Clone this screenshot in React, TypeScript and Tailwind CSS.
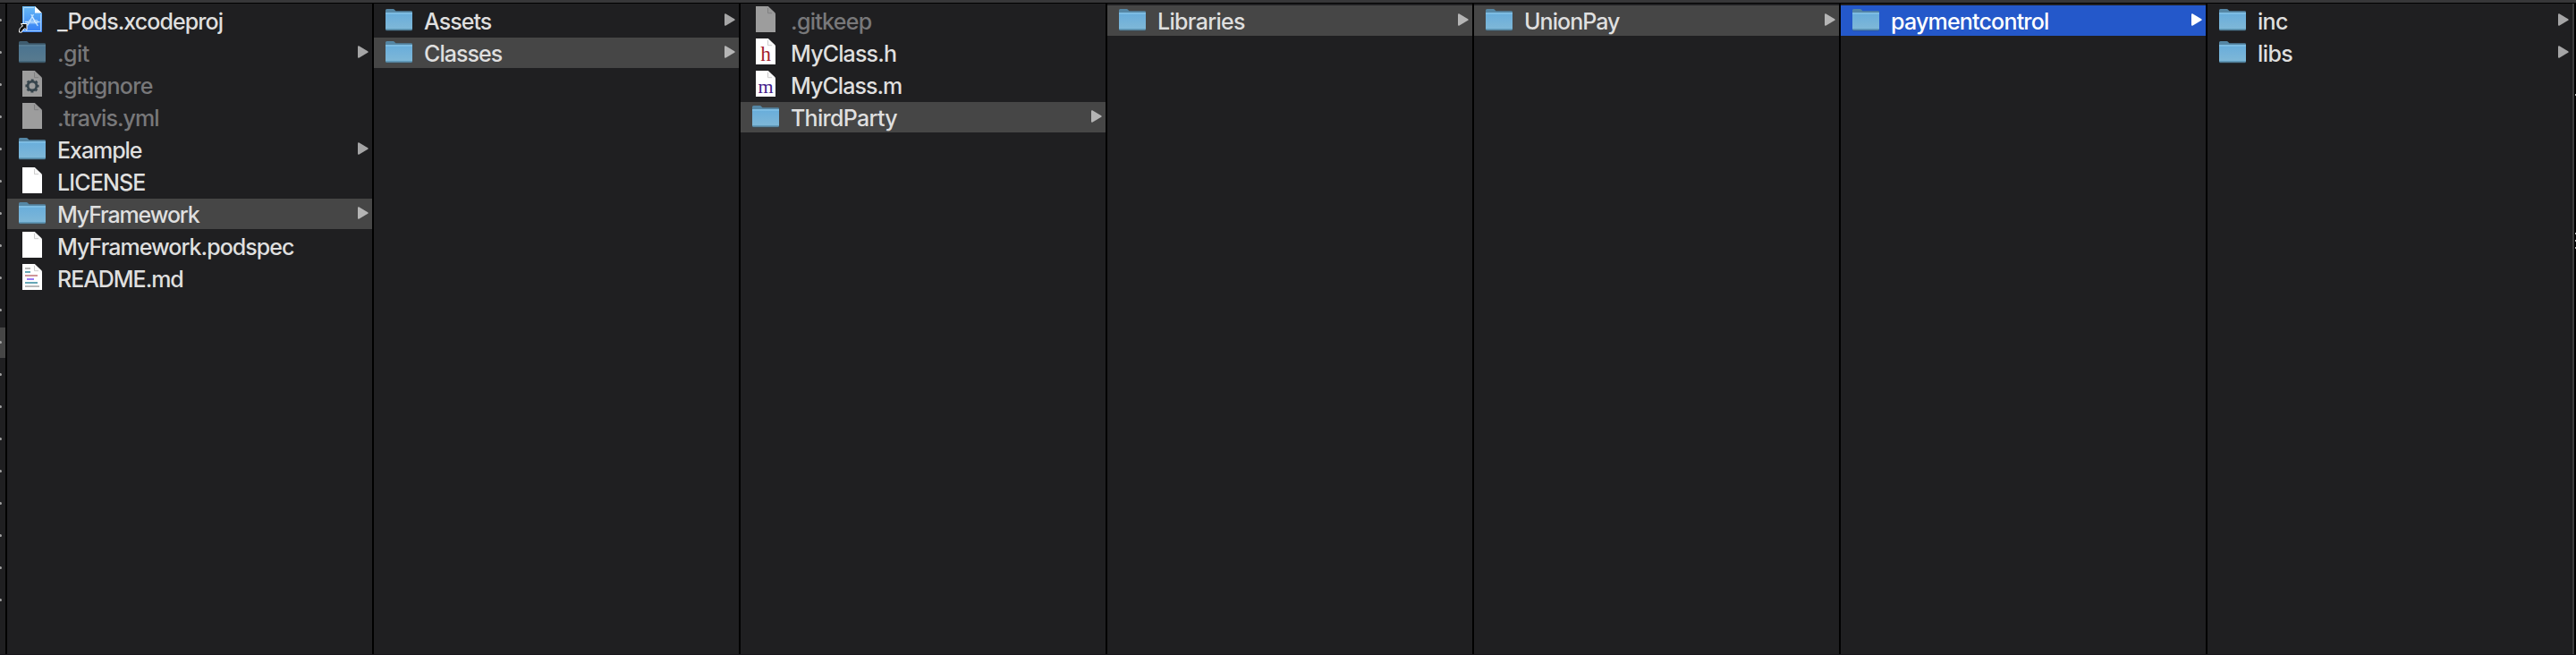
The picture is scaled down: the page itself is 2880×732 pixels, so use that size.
type Kind = "folder" | "blank" | "gear" | "h" | "m" | "markdown" | "project";

interface Entry {
  name: string;
  kind: Kind;
  tracking: string;
  hidden?: boolean;
  selected?: "path" | "active";
}

const columns: Entry[][] = [
  [
    { name: "_Pods.xcodeproj", kind: "project", tracking: "tracking-[-0.93px]" },
    { name: ".git", kind: "folder", tracking: "tracking-[-0.5px]", hidden: true },
    { name: ".gitignore", kind: "gear", tracking: "tracking-[-0.7px]", hidden: true },
    { name: ".travis.yml", kind: "blank", tracking: "tracking-[-0.95px]", hidden: true },
    { name: "Example", kind: "folder", tracking: "tracking-[-1.05px]" },
    { name: "LICENSE", kind: "blank", tracking: "tracking-[-0.85px]" },
    { name: "MyFramework", kind: "folder", tracking: "tracking-[-1.15px]", selected: "path" },
    { name: "MyFramework.podspec", kind: "blank", tracking: "tracking-[-0.97px]" },
    { name: "README.md", kind: "markdown", tracking: "tracking-[-1.05px]" },
  ],
  [
    { name: "Assets", kind: "folder", tracking: "tracking-[-0.95px]" },
    { name: "Classes", kind: "folder", tracking: "tracking-[-0.93px]", selected: "path" },
  ],
  [
    { name: ".gitkeep", kind: "blank", tracking: "tracking-[-0.7px]", hidden: true },
    { name: "MyClass.h", kind: "h", tracking: "tracking-[-0.85px]" },
    { name: "MyClass.m", kind: "m", tracking: "tracking-[-0.95px]" },
    { name: "ThirdParty", kind: "folder", tracking: "tracking-[-0.7px]", selected: "path" },
  ],
  [{ name: "Libraries", kind: "folder", tracking: "tracking-[-0.7px]", selected: "path" }],
  [{ name: "UnionPay", kind: "folder", tracking: "tracking-[-0.95px]", selected: "path" }],
  [{ name: "paymentcontrol", kind: "folder", tracking: "tracking-[-0.8px]", selected: "active" }],
  [
    { name: "inc", kind: "folder", tracking: "tracking-[-0.7px]" },
    { name: "libs", kind: "folder", tracking: "tracking-[-0.6px]" },
  ],
];

function FolderIcon() {
  return (
    <svg width="30" height="34" viewBox="0 0 30 34" className="block">
      <path d="M0 9V5.500Q0 4 1.500 4H8.500Q9.500 4 10.200 5L11.500 6.300H28.800Q30 6.300 30 7.500V12H0Z" fill="#5587a5" />
      <path d="M0 8H30V27Q30 28.500 28.500 28.500H1.500Q0 28.500 0 27Z" fill="#2f566d" opacity="0.7" />
      <path d="M0 8.300H30V26.500Q30 27.500 29 27.500H1Q0 27.500 0 26.500Z" fill="url(#folder-face)" />
      <path d="M0 8.900H30" stroke="#8ecbed" strokeWidth="1.200" />
      <path d="M0 26.500H30" stroke="#5e9abb" strokeWidth="1" />
    </svg>
  );
}

function Page({ children }: { children?: React.ReactNode }) {
  return (
    <svg width="30" height="34" viewBox="0 0 30 34" className="block">
      <path d="M4 1H17.500L26 9.500V30H4Z" fill="#fff" />
      <path d="M13 1H17.500L26 9.500V14Z" fill="url(#page-shade)" />
      <path d="M17.500 1V8.700H26Z" fill="#f8f8f8" />
      <path d="M17.500 3V8.700H22" stroke="#cdcdcd" strokeWidth="1" fill="none" />
      {children}
    </svg>
  );
}

function EntryIcon({ kind }: { kind: Kind }) {
  switch (kind) {
    case "folder":
      return <FolderIcon />;
    case "gear":
      return (
        <Page>
          <circle cx="15" cy="18" r="4.900" fill="none" stroke="#4b6470" strokeWidth="2.800" />
          <circle cx="15" cy="18" r="6.600" fill="none" stroke="#4b6470" strokeWidth="2" strokeDasharray="2.900 2.284" strokeDashoffset="1.450" />
        </Page>
      );
    case "h":
      return (
        <Page>
          <text x="15" y="26" textAnchor="middle" fill="#a3202c" className="font-['Liberation_Serif',serif] text-[23.5px] font-normal">h</text>
        </Page>
      );
    case "m":
      return (
        <Page>
          <text x="15" y="26" textAnchor="middle" fill="#43218b" className="font-['Liberation_Serif',serif] text-[22px] font-normal">m</text>
        </Page>
      );
    case "markdown":
      return (
        <Page>
          <path d="M7 6H13M7 26H23" stroke="#b9b9b9" strokeWidth="2" />
          <path d="M7 10H13M7 22H21" stroke="#66a7b5" strokeWidth="2" />
          <path d="M7 14H21" stroke="#cf9698" strokeWidth="2" />
          <path d="M9 18H17" stroke="#9c7df5" strokeWidth="2" />
        </Page>
      );
    case "project":
      return (
        <svg width="30" height="34" viewBox="0 0 30 34" className="block">
          <path d="M4 1H18L26 9V30H4Z" fill="url(#project-face)" />
          <path d="M5.500 2.500H17M24.700 10V28.500H5.500V2.500" stroke="#b5dcff" strokeWidth="0.900" fill="none" />
          <path d="M18 1V8.500H26Z" fill="#fff" />
          <g stroke="#c4e3ff" strokeWidth="1.400" fill="none" strokeLinecap="round">
            <path d="M16.200 10.500L10 22M14 10.500L21 22.500M7.500 18.500H23" />
            <path d="M15 13L18.500 19.500" stroke="#e4f3ff" strokeWidth="0.800" />
            <path d="M11.500 16.500H20.500V20H9" strokeWidth="0.700" />
          </g>
          <path d="M2.500 20.500H9V27.500L6.800 25.700Q3.600 27.300 3.200 30.200L0.500 30Q0 25 4.400 23.100Z" fill="#111" stroke="#fff" strokeWidth="1" />
        </svg>
      );
    default:
      return <Page />;
  }
}

function Arrow({ active }: { active: boolean }) {
  return (
    <svg width="12" height="14" viewBox="0 0 12 14" className="mb-[2px] block shrink-0">
      <path
        d="M0 1.200Q0 0 1.200 0.200L11.200 6.200Q12.300 7 11.200 7.800L1.200 13.800Q0 14 0 12.800Z"
        className={active ? "fill-white" : "fill-white/60"}
      />
    </svg>
  );
}

function Row({ entry }: { entry: Entry }) {
  const background =
    entry.selected === "active" ? "bg-[#2458ca]" : entry.selected === "path" ? "bg-[#464646]" : "";
  const color =
    entry.selected === "active" ? "text-white" : entry.hidden ? "text-[#78787a]" : "text-[#dfdfdf]";
  return (
    <li className={`flex h-[34px] items-center pr-1 pl-[13px] ${background}`}>
      <span className={`shrink-0 ${entry.hidden ? (entry.kind === "folder" ? "opacity-60" : "opacity-[0.56]") : ""}`}>
        <EntryIcon kind={entry.kind} />
      </span>
      <span className={`ml-[13px] grow pt-0.5 text-[25px] leading-[32px] font-medium whitespace-pre ${entry.tracking} ${color}`}>
        {entry.name}
      </span>
      {entry.kind === "folder" && <Arrow active={entry.selected === "active"} />}
    </li>
  );
}

export default function App() {
  return (
    <div className="flex h-[732px] w-[2880px] flex-col overflow-hidden bg-[#1f1f21] font-['Inter',sans-serif]">
      <svg width="0" height="0" className="absolute">
        <defs>
          <linearGradient id="folder-face" x1="0" y1="0" x2="0" y2="1">
            <stop offset="0" stopColor="#68addb" />
            <stop offset="1" stopColor="#80b8d7" />
          </linearGradient>
          <linearGradient id="project-face" x1="0" y1="0" x2="0" y2="1">
            <stop offset="0" stopColor="#67b9f5" />
            <stop offset="1" stopColor="#347df5" />
          </linearGradient>
          <linearGradient id="page-shade" x1="0" y1="1" x2="1" y2="0">
            <stop offset="0.500" stopColor="#fff" />
            <stop offset="1" stopColor="#ddd" />
          </linearGradient>
        </defs>
      </svg>
      <div className="h-1 shrink-0 border-b border-black bg-[#373739]" />
      <div className="flex min-h-0 grow">
        <ul className="flex w-2 shrink-0 flex-col gap-0.5 border-r-2 border-black pt-0.5">
          {Array.from({ length: 19 }, (_, i) => (
            <li key={i} className={`flex h-[34px] items-center pb-0.5 ${i === 10 ? "bg-[#464646]" : ""}`}>
              <span className="h-[3px] w-[2px] rounded-r-full bg-[#a0a0a0]" />
            </li>
          ))}
        </ul>
        {columns.map((entries, i) => (
          <ul
            key={i}
            className={`flex w-[410px] shrink-0 flex-col gap-0.5 border-r-2 pt-0.5 ${i === 6 ? "border-[#3a3a3b]" : "border-black"}`}
          >
            {entries.map((entry) => (
              <Row key={entry.name} entry={entry} />
            ))}
          </ul>
        ))}
        <div className="flex w-[2px] shrink-0 flex-col items-end bg-black pt-[101px]">
          <span className="h-[2px] w-px bg-[#bbb]" />
          <span className="mt-[153px] h-[2px] w-px bg-[#bbb]" />
          <span className="mt-[6px] h-[2px] w-px bg-[#bbb]" />
          <span className="mt-[6px] h-[2px] w-px bg-[#bbb]" />
        </div>
      </div>
      <div className="h-px shrink-0 bg-[#18161b]" />
    </div>
  );
}
